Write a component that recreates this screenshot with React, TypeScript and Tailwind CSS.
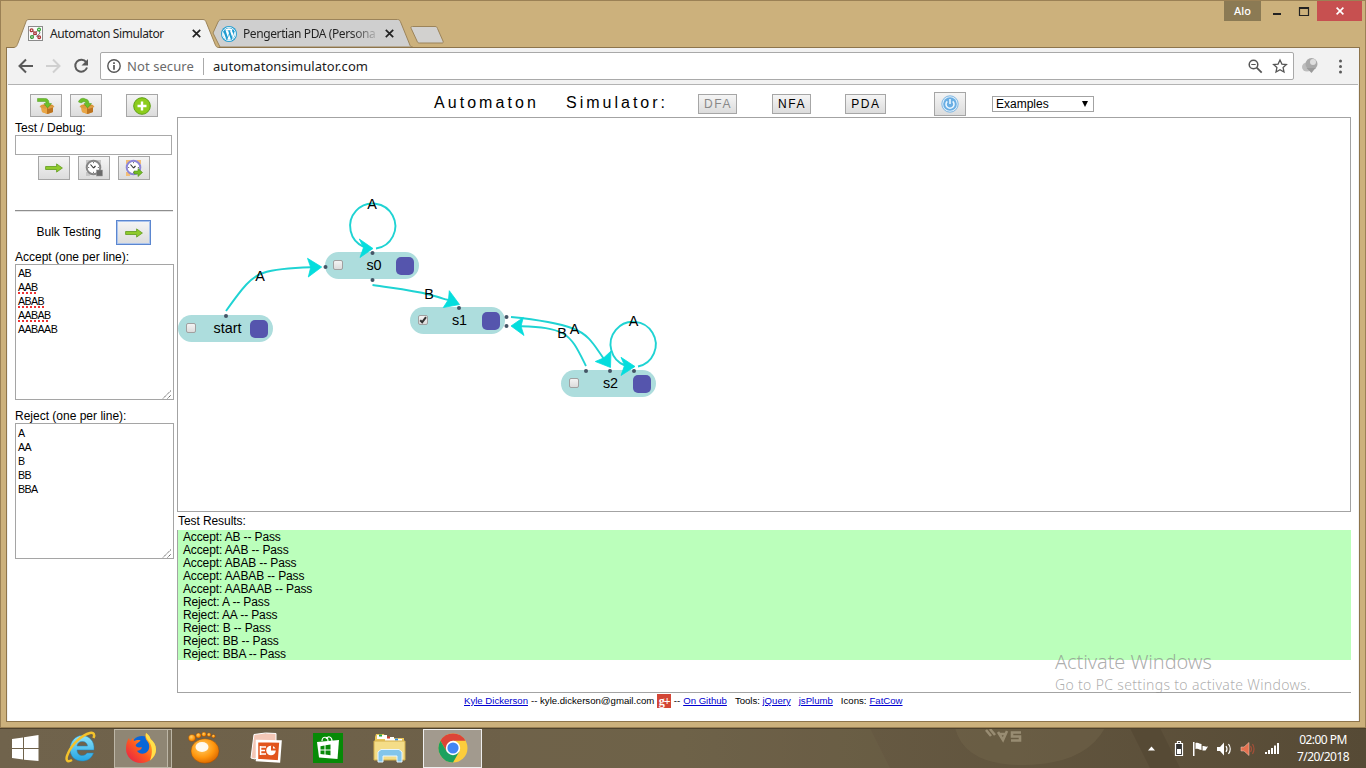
import type { ReactNode } from "react";

const ACCEPT = ["AB", "AAB", "ABAB", "AABAB", "AABAAB"];
const REJECT = ["A", "AA", "B", "BB", "BBA"];
const UI = "font-['Noto_Sans',sans-serif]";

function Close() {
  return (
    <svg className="h-[9px] w-[9px] shrink-0" viewBox="0 0 9 9">
      <path d="M.8.8l7.4 7.4M8.2.8L.8 8.2" stroke="#222" strokeWidth="1.7" />
    </svg>
  );
}

function WordPress() {
  return (
    <svg className="h-4 w-4 shrink-0" viewBox="0 0 24 24">
      <circle cx="12" cy="12" r="12" fill="#1e9bd0" />
      <circle cx="12" cy="12" r="10" fill="none" stroke="#fff" strokeWidth="1.3" />
      <path
        fill="#fff"
        d="M3.9 9.1l4 10.9A8.8 8.8 0 0 1 3.9 9.1zM5 6.8A8.8 8.8 0 0 1 18 5.5c-1.600 0-1.900 2-.8 3.500 1 1.600 1.200 3 .6 5l-1 3-3.300-9.900 1.200-.2V6.200H9.400v.7l1.300.2 1.300 3.600-1.900 5.900L7 7.100l1.200-.2v-.7H5zM12.200 12.700l2.700 7.500a9 9 0 0 1-5.400.1zM19.900 8a8.800 8.800 0 0 1-3.600 11.700l2.800-8c.4-1.300.8-2.500.8-3.700z"
      />
    </svg>
  );
}

function Favicon() {
  return (
    <svg className="h-[15px] w-[15px] shrink-0" viewBox="0 0 15 15">
      <rect x=".5" y=".5" width="14" height="14" fill="#fafafa" stroke="#8b8b8b" />
      <path d="M3.500 4l3.500 3-3 4M7 7l4-3.500M11 4l1 3-3.500 4M7 7l4 4.500" fill="none" stroke="#777" />
      <g fill="#fff" strokeWidth="1.300">
        <circle cx="3.600" cy="4.200" r="1.400" stroke="#a33" />
        <circle cx="11" cy="3.600" r="1.400" stroke="#3a3" />
        <circle cx="7" cy="7.200" r="1.300" stroke="#a33" />
        <circle cx="4" cy="11" r="1.400" stroke="#393" />
        <circle cx="11.200" cy="11.200" r="1.300" stroke="#a33" />
      </g>
    </svg>
  );
}

function TabStrip() {
  return (
    <div className="flex h-[46px] pl-[13px]">
      <div className="relative z-10 mt-[18px] flex h-[29px] w-[200px] items-center pl-[14px]">
        <svg className="absolute left-0 top-0" width="206" height="29" viewBox="0 0 206 29">
          <path d="M0 28.500C3 28 3 26 4 24L11.500 4C12.500 1 13 .5 15 .5H189c2 0 2.500 1 3.500 3.500l8.500 21c.8 2.300 1.500 3.500 4 3.500V30H0z" fill="#f2f2f2" />
          <path d="M0 28.500C3 28 3 26 4 24L11.500 4C12.500 1 13 .5 15 .5H189c2 0 2.500 1 3.500 3.500l8.500 21c.8 2.300 1.500 3.500 4 3.500" fill="none" stroke="#9c845a" />
        </svg>
        <div className="relative flex items-center">
          <Favicon />
          <span className={`${UI} ml-[7px] w-[142px] whitespace-nowrap text-[12px] tracking-[-0.4px] text-[#222]`}>Automaton Simulator</span>
          <Close />
        </div>
      </div>
      <div className="relative mt-[18px] flex h-[28px] w-[196px] items-center pl-[7px] pt-px">
        <svg className="absolute left-[-4px] top-0" width="204" height="28" viewBox="0 0 204 28">
          <path d="M3 14L8 3C9 1 10 .5 12 .5H187.500c2 0 2.500 1 3.500 3.500L199.500 25c.5 2 1.500 3 3 3H10z" fill="#cfcfcf" stroke="#9c845a" />
        </svg>
        <div className="relative flex items-center">
          <WordPress />
          <span className={`${UI} ml-[6px] mr-[8px] w-[134px] whitespace-nowrap bg-linear-to-r from-[#222] from-80% to-[#bbb] bg-clip-text text-[12px] tracking-[-0.4px] text-transparent`}>Pengertian PDA (Persona</span>
          <Close />
        </div>
      </div>
      <svg className="mt-[25px] h-[18px] w-[35px]" viewBox="0 0 35 18">
        <path d="M2.500.5H25c1.500 0 2 .5 2.500 2L33 15c.6 1.500 0 2-1 2H9.500c-1.500 0-2-.5-2.500-2L1.200 2.500C.6 1 1 .5 2.500.5z" fill="#d2d1cf" stroke="#9c845a" />
      </svg>
      <div className="ml-auto flex h-[20px] items-center self-start pr-[3px]">
        <div className={`${UI} flex h-[20px] w-[37px] items-center justify-center bg-[#8b7a54] text-[11px] font-medium text-white`}>Alo</div>
        <svg className="h-[20px] w-[56px]" viewBox="0 0 56 20">
          <path d="M12 13h8" stroke="#222" strokeWidth="2" />
          <path d="M38.500 6.500h9v8h-9zM38 7.500h10" fill="none" stroke="#222" strokeWidth="1.200" />
        </svg>
        <div className="flex h-[20px] w-[45px] items-center justify-center bg-[#c75050]">
          <svg width="8" height="8" viewBox="0 0 8 8"><path d="M.6.6l6.800 6.800M7.400.6L.6 7.400" stroke="#fff" strokeWidth="1.600" /></svg>
        </div>
      </div>
    </div>
  );
}

function Toolbar() {
  return (
    <div className="flex h-[37px] items-center border-b border-[#b3b3b3] bg-[#f2f2f2]">
      <svg className="h-[36px] w-[92px] shrink-0" viewBox="1 0 92 36" fill="none" strokeWidth="2">
        <path d="M26 18H13M19 11.500L12.500 18l6.500 6.500" stroke="#5a5a5a" />
        <path d="M39 18h13M46 11.500l6.500 6.500-6.500 6.500" stroke="#d0d0d0" />
        <path d="M79.200 14.200A6 6 0 1 0 80 19.500" stroke="#5a5a5a" />
        <path d="M81 11v6.500h-6.500z" fill="#5a5a5a" />
      </svg>
      <div className="flex h-[28px] w-[1194px] items-center rounded-[2px] border border-[#a9a9a9] bg-white pl-[6px] pr-[5px]">
        <svg className="h-[14px] w-[14px]" viewBox="0 0 14 14">
          <circle cx="7" cy="7" r="6.200" fill="none" stroke="#555" strokeWidth="1.400" />
          <path d="M7 3.200v1.700M7 6v4.800" stroke="#555" strokeWidth="1.700" />
        </svg>
        <span className={`${UI} ml-[6px] w-[76px] whitespace-nowrap pt-[2px] text-[13px] tracking-[0.08px] text-[#6b6b6b]`}>Not secure</span>
        <div className="h-[17px] w-px bg-[#aaa]" />
        <span className={`${UI} ml-[9px] whitespace-nowrap pt-[2px] text-[13px] tracking-[0.05px] text-[#1c1c1c]`}>automatonsimulator.com</span>
        <svg className="ml-auto h-[16px] w-[40px]" viewBox="0 0 40 16" fill="none" stroke="#555">
          <circle cx="5.500" cy="6.500" r="4.300" strokeWidth="1.500" />
          <path d="M8.700 9.700l5 5" strokeWidth="1.800" />
          <path d="M3.300 6.500h4.400" />
          <path d="M32 2l1.900 4.100 4.500.5-3.300 3 .9 4.400-4-2.200-4 2.200.9-4.400-3.300-3 4.500-.5z" strokeWidth="1.300" />
        </svg>
      </div>
      <svg className="h-[30px] w-[60px]" viewBox="0 0 60 30">
        <ellipse cx="13" cy="16" rx="5" ry="4.500" fill="#bdbdbd" />
        <circle cx="17.500" cy="13" r="6" fill="#a9a9a9" />
        <path d="M12.500 17l5 5 4-5z" fill="#9a9a9a" />
        <circle cx="19" cy="11" r="3" fill="#dedede" />
        <g fill="#5a5a5a"><circle cx="46.500" cy="10" r="1.500" /><circle cx="46.500" cy="15.500" r="1.500" /><circle cx="46.500" cy="21" r="1.500" /></g>
      </svg>
    </div>
  );
}

const BTN = "flex shrink-0 items-center justify-center border border-[#a6a6a6] bg-linear-to-b from-[#f5f5f5] to-[#dcdcdc]";

function BoxIcon({ flip }: { flip?: boolean }) {
  return (
    <svg width="18" height="18" viewBox="0 0 18 18">
      <path d="M4 8l7-1.500L16 8v7l-5 2-6-2z" fill="#d68b2a" />
      <path d="M4 8l6 2v7l-5-2z" fill="#e9a646" />
      <path d="M10 10l6-2v7l-6 2z" fill="#bd7420" />
      <path d="M4 8l-1.500 2 6 2L10 10zM16 8l1.500 2-6 2L10 10z" fill="#dc9c42" />
      {flip ? (
        <path d="M1.500 5C2.500 1.500 6 .5 8.500 2c2.500.5 3.500 2 3.500 4.500h2.500L10.500 11 7 6.500h2C8.500 4.500 6 4 4.500 6z" fill="#6cc02a" stroke="#4c9a1c" strokeWidth=".5" />
      ) : (
        <path d="M.5 1.500h7C11 1.500 12 3.500 12 6.500h2.500L10.500 11 7 6.500h2C9 5 8.500 4.500 7 4.500H.5z" fill="#6cc02a" stroke="#4c9a1c" strokeWidth=".5" />
      )}
    </svg>
  );
}

function AddIcon() {
  return (
    <svg width="18" height="18" viewBox="0 0 18 18">
      <circle cx="9" cy="9" r="8.300" fill="#8ccc1c" stroke="#5da012" strokeWidth="1" />
      <path d="M9 4.500v9M4.500 9h9" stroke="#fff" strokeWidth="2.400" />
    </svg>
  );
}

function ArrowIcon() {
  return (
    <svg width="18" height="10" viewBox="0 0 18 10">
      <path d="M.6 3.500h11V.9L17.400 5l-5.800 4.100V6.500H.6z" fill="#8fca2c" stroke="#5f9a1c" strokeWidth=".8" />
    </svg>
  );
}

function ClockIcon({ run }: { run?: boolean }) {
  return (
    <svg width="18" height="18" viewBox="0 0 18 18">
      <path d="M1 1h4v4H1zM12 1h4v4h-4zM1 13h4v4H1z" fill={run ? "#f2bd76" : "#c6c6c6"} />
      <circle cx="8.500" cy="8.500" r="6.800" fill="#fff" stroke={run ? "#8c85d6" : "#858585"} strokeWidth="2" />
      <path d="M8.500 9L5.500 5.500M8.500 9l2-2" stroke="#333" strokeWidth="1.100" />
      <path d="M8.500 3v1.200M14 8.500h-1.200M3 8.500h1.200M8.500 14v-1.200" stroke="#777" />
      {run ? (
        <path d="M9 12h4V9.500l4.500 4-4.500 4V15H9z" fill="#74bd25" stroke="#4e8f18" strokeWidth=".6" />
      ) : (
        <rect x="11.500" y="11" width="6" height="6" fill="#6b6b6b" stroke="#999" strokeWidth=".5" />
      )}
    </svg>
  );
}

function ListBox({ pad, children }: { pad: string; children: ReactNode }) {
  return (
    <div className={`relative h-[136px] w-[159px] border border-[#a5a5a5] bg-white px-[2px] ${pad} text-[10.700px] leading-[14px] tracking-[-0.6px]`}>
      {children}
      <svg className="absolute bottom-0 right-[1px]" width="10" height="10" viewBox="0 0 10 10">
        <path d="M1 9.500L9 1.500M5.500 9.500L9 6" stroke="#666" strokeDasharray="1.500 .5" />
      </svg>
    </div>
  );
}

function Sidebar() {
  return (
    <aside className="w-[169px] shrink-0 pl-[7px] text-[12px] leading-[14px]">
      <div className="flex pl-[15px] pt-[9px]">
        <div className={`${BTN} h-[23px] w-[32px]`}><BoxIcon /></div>
        <div className={`${BTN} ml-2 h-[23px] w-[32px]`}><BoxIcon flip /></div>
        <div className={`${BTN} ml-6 h-[23px] w-[32px]`}><AddIcon /></div>
      </div>
      <div className="mt-[4px]">Test / Debug:</div>
      <div className="h-[20px] w-[157px] border border-[#a9a9a9]" />
      <div className="mt-[1px] flex gap-2 pl-[23px]">
        <div className={`${BTN} h-[24px] w-[32px]`}><ArrowIcon /></div>
        <div className={`${BTN} h-[24px] w-[32px]`}><ClockIcon /></div>
        <div className={`${BTN} h-[24px] w-[32px]`}><ClockIcon run /></div>
      </div>
      <div className="mt-[30px] w-[158px] border-t border-[#8e8e8e] border-b border-b-[#e4e4e4]" />
      <div className="mt-[8px] flex items-center pl-[21.500px]">
        <span className="w-[79.500px] pb-[2px]">Bulk Testing</span>
        <div className={`${BTN} h-[25px] w-[35px] border-[#5b86cf]! shadow-[inset_0_0_0_1px_#a9c3ee]`}><ArrowIcon /></div>
      </div>
      <div className="mt-[5px]">Accept (one per line):</div>
      <ListBox pad="pt-px">
        {ACCEPT.map((s, i) => (
          <div key={s}>
            <span className={i > 0 && i < 4 ? "underline decoration-[#e33] decoration-dotted decoration-[1.5px] underline-offset-[1px] [text-decoration-skip-ink:none]" : ""}>{s}</span>
          </div>
        ))}
      </ListBox>
      <div className="mt-[9px]">Reject (one per line):</div>
      <ListBox pad="pt-[2px]">{REJECT.map((s) => <div key={s}>{s}</div>)}</ListBox>
    </aside>
  );
}

function Header() {
  const kind = `${BTN} h-[20px] pl-[1px] text-[12px] tracking-[1.600px]`;
  return (
    <header className="flex h-[32px] items-start pl-[257px]">
      <span className="mt-[7px] w-[132px] text-[16px] leading-[22px] tracking-[3.050px]">Automaton</span>
      <span className="mt-[7px] w-[132px] text-[16px] leading-[22px] tracking-[3px]">Simulator:</span>
      <div className={`${kind} mt-[9px] w-[39px] text-[#888]`}>DFA</div>
      <div className={`${kind} ml-[35px] mt-[9px] w-[39px]`}>NFA</div>
      <div className={`${kind} ml-[34px] mt-[9px] w-[41px]`}>PDA</div>
      <div className={`${BTN} ml-[48px] mt-[7px] h-[24px] w-[32px]`}>
        <svg width="18" height="18" viewBox="0 0 18 18">
          <circle cx="9" cy="9" r="8.200" fill="#e2f0fb" stroke="#7fb7e3" />
          <circle cx="9" cy="9" r="6.800" fill="#69aee3" />
          <path d="M6.300 6.300a4 4 0 1 0 5.400 0M9 4v5" fill="none" stroke="#e9f5ff" strokeWidth="1.600" />
        </svg>
      </div>
      <div className="ml-[26px] mt-[11px] flex h-[16px] w-[102px] items-center justify-between border border-[#a3a3a3] bg-white pl-[3px] pr-[5px] text-[12px] leading-[14px]">
        Examples
        <svg width="6" height="6" viewBox="0 0 6 6"><path d="M0 0h6L3 6z" /></svg>
      </div>
    </header>
  );
}

const NODES = [
  { id: "start", pos: "left-0 top-[197px] w-[95px]", checked: false },
  { id: "s0", pos: "left-[147px] top-[134px] w-[94px]", checked: false },
  { id: "s1", pos: "left-[232px] top-[189px] w-[95px]", checked: true },
  { id: "s2", pos: "left-[383px] top-[252px] w-[95px]", checked: false },
];
const EDGES = [
  "M226 311C243 287 251 277 263 273S292 267.800 311 267.300",
  "M376 248.500A22.600 22.600 0 1 0 364 247",
  "M372.500 285C391 288 411 290 429 294.500S441 299 449 300",
  "M511 317C536 319.500 557 322.500 573 328.500S594 345 604 359",
  "M586 366C578 350 573 339 563 333.500S541 327 521 326.300",
  "M638 366.500A22.600 22.600 0 1 0 625 365.500",
];
const ARROWS = [
  "321.700 267 307.500 258.300 310.700 267.300 308.300 277",
  "373 248.500 359.300 239 363.500 247.500 360 257.500",
  "459.500 304.500 449.300 290.700 448.500 299.500 443.300 307.500",
  "610.500 367.500 611 351 603.500 358 595.300 361.500",
  "511 326 523.300 317.500 521 326.300 524 335.500",
  "635 366.500 621 357.300 624.500 365.500 621 375.500",
];
const DOTS = [[226, 316], [325.500, 267], [372.500, 253], [372.500, 280], [459, 308], [506.500, 317], [506.500, 326], [586, 371], [610, 371], [634, 371]];
const LABELS: [string, number, number][] = [["A", 260, 281], ["A", 372, 209], ["B", 429, 299], ["A", 574.500, 334], ["B", 562, 338], ["A", 633.500, 326]];

function Diagram() {
  return (
    <div className="relative h-[395px] w-[1174px] border border-[#a3a3a3]">
      {NODES.map((n) => (
        <div key={n.id} className={`absolute ${n.pos} flex h-[27px] items-center rounded-full bg-[#addddd] pl-[8px] pr-[5px]`}>
          <div className="mb-[2px] h-[10px] w-[10px] shrink-0 rounded-[2px] border border-[#a0a0a0] bg-linear-to-b from-[#f3f3f3] to-[#dcdcdc]">
            {n.checked && (
              <svg className="h-[8px] w-[8px]" viewBox="0 0 8 8"><path d="M1.200 4.200l2 2L7 1.200" fill="none" stroke="#333" strokeWidth="2" /></svg>
            )}
          </div>
          <span className="mb-[2px] min-w-0 flex-1 pl-[9px] text-center text-[14.400px] leading-[18px]">{n.id}</span>
          <div className="h-[18px] w-[18px] shrink-0 rounded-[5px] bg-[#5555ad]" />
        </div>
      ))}
      <svg className="absolute left-0 top-0" width="1172" height="393" viewBox="178 118 1172 393">
        {EDGES.map((d) => <path key={d} d={d} fill="none" stroke="#1fd3d3" strokeWidth="1.900" />)}
        {ARROWS.map((p) => <polygon key={p} points={p} fill="#05dddd" stroke="#05dddd" strokeWidth=".8" />)}
        {DOTS.map(([x, y]) => <circle key={`${x}-${y}`} cx={x} cy={y} r="2" fill="#456" />)}
        {LABELS.map(([t, x, y]) => <text key={`${x}`} x={x} y={y} textAnchor="middle" fontSize="14.400">{t}</text>)}
      </svg>
    </div>
  );
}

function Footer() {
  const link = "text-[#0000d0] underline";
  return (
    <footer className="flex h-[16px] items-center whitespace-nowrap pl-[287px] text-[9.600px]">
      <a className={link}>Kyle Dickerson</a>
      <span className="ml-[3px]">-- kyle.dickerson@gmail.com</span>
      <div className="ml-[3px] mr-[2.500px] flex h-[14px] w-[14px] items-center justify-center bg-[#d34636] font-['Liberation_Serif',serif] text-[12px] font-bold leading-none tracking-[-1px] text-white">g+</div>
      <span>--</span>
      <a className={`${link} ml-[3px]`}>On Github</a>
      <span className="ml-[8px]">Tools:</span>
      <a className={`${link} ml-[2.500px]`}>jQuery</a>
      <a className={`${link} ml-[8px]`}>jsPlumb</a>
      <span className="ml-[8px]">Icons:</span>
      <a className={`${link} ml-[3px]`}>FatCow</a>
    </footer>
  );
}

function Page() {
  return (
    <div className="flex h-[636px] bg-white font-['Liberation_Sans',Arial,sans-serif] text-black">
      <Sidebar />
      <main className="w-[1174px]">
        <Header />
        <Diagram />
        <div className="h-[18px] pl-px text-[12px] leading-[18px] tracking-[-0.08px]">Test Results:</div>
        <div className="h-[163px] w-[1174px] border-b border-l border-[#a3a3a3]">
          <div className="h-[130px] bg-[#bbffbb] pl-[5px] pt-px text-[12px] leading-[13px] tracking-[-0.13px]">
            {ACCEPT.map((s) => <div key={s}>Accept: {s} -- Pass</div>)}
            {REJECT.map((s) => <div key={s}>Reject: {s} -- Pass</div>)}
          </div>
        </div>
        <Footer />
      </main>
    </div>
  );
}

function TaskIcons() {
  return (
    <>
      <svg className="ml-[12px] h-[27px] w-[27px]" viewBox="0 0 27 27" fill="#fff">
        <path d="M0 4l11-1.600V13H0zM12 2.200L26.500 0v13H12zM0 14h11v10.500L0 23zM12 14h14.500v12L12 24.700z" />
      </svg>
      <svg className="ml-[25px] h-[34px] w-[34px]" viewBox="0 0 34 34">
        <defs><linearGradient id="ie" x1="0" y1="0" x2="0" y2="1"><stop offset="0" stopColor="#8be3fb" /><stop offset="1" stopColor="#25a5e2" /></linearGradient></defs>
        <path d="M30 19H13c.3 4 2.500 5.500 5.300 5.500 2.300 0 3.700-1 4.700-2.500h6.500C27.500 27.500 23.500 30 18 30 10.500 30 6 25 6 18S11 4.500 18 4.500 31 10 30 19zM13 15h10.500c-.3-3-2.300-4.500-5.200-4.500S13.500 12 13 15z" fill="url(#ie)" stroke="#1f83bd" strokeWidth=".5" />
        <path d="M8 29C3 32 1 29 4 22.500 8 13 18 4 26 2c4-.8 5 1.500 3.500 5" fill="none" stroke="#f4c22c" strokeWidth="2.500" />
      </svg>
      <div className="ml-[16px] flex h-[39px] w-[54px] items-center justify-center border border-[#bdb6a6] bg-[#8f8674]">
        <svg width="32" height="32" viewBox="0 0 32 32">
          <defs>
            <linearGradient id="fx" x1="0" y1="1" x2="1" y2="0"><stop offset="0" stopColor="#e3174f" /><stop offset=".45" stopColor="#ff5b1f" /><stop offset="1" stopColor="#ffd92a" /></linearGradient>
          </defs>
          <circle cx="17" cy="15" r="11" fill="#0a66d8" />
          <path d="M21 1c3 2 4 4 4.500 6C29 10 31 13 31 17.500 31 25.500 24 31 16 31S1 25 1 17C1 12 2 9 4 6l1 3 3-3 1 3 3-1c2 0 3 0 3.500.7L12 11.500c-2.500 2-1 3.500 2 4l3-.2c-1 3-3.500 3.700-5 3.500 2 4 8.500 4 11 0 2-3 1.500-7-.5-9.300C20 7 20 4 21 1z" fill="url(#fx)" />
          <path d="M21 1c3 2 4 4 4.500 6C29 10 31 13 31 17.500c0 4.500-2.500 8.500-6 11C27 23 28 17 25 11c-1.500-3-5-4.500-4-10z" fill="#ffe04a" />
        </svg>
      </div>
      <div className="h-[39px] w-[4px] border border-l-0 border-[#bdb6a6] bg-[#7d735f]" />
      <svg className="ml-[16px] h-[34px] w-[34px]" viewBox="0 0 34 34">
        <defs><radialGradient id="gom" cx=".4" cy=".35" r=".7"><stop offset="0" stopColor="#ffd06a" /><stop offset=".6" stopColor="#ff970e" /><stop offset="1" stopColor="#d96500" /></radialGradient></defs>
        <g fill="url(#gom)" stroke="#8f4703" strokeWidth=".4">
          <ellipse cx="17" cy="20" rx="14" ry="12.300" /><circle cx="4" cy="7" r="3.600" /><circle cx="10.500" cy="4.500" r="2.600" /><circle cx="16" cy="3.400" r="2.300" /><circle cx="21" cy="3.800" r="2" /><circle cx="25.500" cy="5.200" r="1.800" />
        </g>
        <ellipse cx="14" cy="16" rx="6.500" ry="5" fill="#fff" opacity=".9" />
      </svg>
      <svg className="ml-[28px] h-[32px] w-[33px]" viewBox="0 0 33 32">
        <path d="M4 2.500Q16 0 26 1.500V9L5 27 1 26z" fill="#f4c7b6" stroke="#fff" />
        <path d="M7 9l23.500.5-1.500 20-22-1.500z" fill="#e2551d" stroke="#fff" strokeWidth="2.500" />
        <circle cx="21" cy="18.500" r="4.800" fill="#fff" />
        <path d="M21 18.500h5v-2h-3v-3h-2z" fill="#e2551d" />
        <path d="M10 15h6M10 18.500h5M10 22h6M10.500 14v9" stroke="#fff" strokeWidth="1.600" />
      </svg>
      <svg className="ml-[30px] h-[30px] w-[30px]" viewBox="0 0 30 30">
        <path d="M0 0h30v30H0z" fill="#078a07" />
        <path d="M9 8c0-5 6-5 6 0M13 6c2-4 6-2 6 2" fill="none" stroke="#fff" strokeWidth="1.200" />
        <path d="M4 9l22-2-1.500 19L6 24.500z" fill="#fff" />
        <path d="M7.500 13.200l4-.7v4h-4zM12.500 12.300l5-.8v5h-5zM7.500 17.500h4v4l-4-.6zM12.500 17.500h5v4.800l-5-.7z" fill="#078a07" />
      </svg>
      <svg className="ml-[30px] h-[32px] w-[34px]" viewBox="0 0 34 32">
        <path d="M2 5l1-3h8l1 3h7l1 1h11v6H2z" fill="#e9c55a" />
        <path d="M4 3h10v4H4zM12 5h9v4h-9zM20 7h9v4h-9z" fill="#fff" />
        <path d="M6 2.500h3v2H6z" fill="#29a343" /><path d="M14 4.500h3v2h-3z" fill="#d3412e" /><path d="M22 6.500h3v2h-3z" fill="#318de0" />
        <path d="M1 9h31v19H1z" fill="#f4dd88" stroke="#d4b04a" />
        <path d="M5 30V20l3-2.500h18l3 2.500v10h-5v-6H10v6z" fill="#83c5ea" stroke="#e9f6fd" />
      </svg>
      <div className="ml-[16px] flex h-[39px] w-[59px] items-center justify-center border border-[#eee] bg-[#a29a8e]">
        <svg width="30" height="30" viewBox="0 0 30 30">
          <circle cx="15" cy="15" r="14.500" fill="#fccd3c" />
          <path d="M2.440 7.750A14.500 14.500 0 0 1 27.560 7.750H15L8.700 18.600z" fill="#dc4437" />
          <path d="M2.440 7.750A14.500 14.500 0 0 0 15 29.500L21.300 18.600 15 22 8.700 18.600z" fill="#1ca15f" />
          <circle cx="15" cy="15" r="7.200" fill="#fff" /><circle cx="15" cy="15" r="5.600" fill="#4385f4" />
        </svg>
      </div>
    </>
  );
}

function Tray() {
  return (
    <svg className="ml-auto h-[20px] w-[136px]" viewBox="0 0 136 20" fill="#fff">
      <path d="M4 12.500l3.500-4 3.500 4z" />
      <path d="M31.500 5.500h7v12h-7zM33.500 3.500h3v2h-3z" fill="#333" stroke="#fff" strokeWidth="1.200" /><path d="M33 11h4v5h-4z" />
      <path d="M49 4h1.500v14H49zM51.500 5c3-1 4 1 6 1v6c-2 0-3-2-6-1zM58.500 8c2 0 3 1 5.500.5l-2.500 4h-3z" />
      <path d="M73 9h3l4-4.500v13L76 13h-3z" />
      <path d="M82 8q2 3 0 6M84.500 6q3.500 5 0 10" fill="none" stroke="#fff" strokeWidth="1.200" />
      <path d="M97 9h3l5-4.500v13L100 13h-3z" fill="#e4714f" stroke="#f6cabc" strokeWidth=".5" />
      <path d="M106.500 8q2 3 0 6M108.500 6q3 5 0 10" fill="none" stroke="#a34f38" strokeWidth="1.200" />
      <path d="M121 14h2v2h-2zM124 12h2v4h-2zM127 10h2v6h-2zM130 7.500h2V16h-2zM133 5h2v11h-2z" />
    </svg>
  );
}

export default function App() {
  return (
    <div className="relative flex h-[768px] w-[1366px] flex-col overflow-hidden">
      <div className="h-[728px] border border-[#9b8155] bg-[#ccb17c]">
        <TabStrip />
        <div className="mx-[5px] h-[675px] border border-[#8d744b] bg-[#f2f2f2] px-px">
          <Toolbar />
          <Page />
        </div>
      </div>
      <div className="relative flex h-[40px] items-center bg-linear-to-r from-[#70634c] via-[#6c5f47] to-[#564a35]">
        <svg className="absolute left-0 top-0" width="1366" height="40" viewBox="0 0 1366 40">
          <path d="M500 0h370l20 40H500z" fill="#7a6c52" opacity=".2" />
          <path d="M955 0h150q-20 36-80 37t-70-37z" fill="#75684d" opacity=".4" />
          <path d="M1130 0h30l20 40h-30z" fill="#4f432f" opacity=".5" />
          <g fill="none" stroke="#a89c82" strokeWidth="2.600" opacity=".75">
            <path d="M986 2l5 6M990 1l5 6M998 4l5 8 4-9M1000 6h6M1021 4.500h-9v4h8v4h-9" />
          </g>
          <path d="M0 .5h1366" stroke="#4d412c" />
        </svg>
        <div className="relative flex w-full items-center">
          <TaskIcons />
          <Tray />
          <div className={`${UI} ml-[15px] mr-[15px] w-[56px] whitespace-nowrap text-center text-[12px] leading-[17px] tracking-[-0.55px] text-white`}>
            <div>02:00 PM</div>
            <div>7/20/2018</div>
          </div>
        </div>
      </div>
      <div className={`${UI} pointer-events-none absolute left-[1055px] top-[648px] whitespace-nowrap font-light text-[#8a8a8a]/70`}>
        <div className="text-[20px] leading-[28px] tracking-[-0.1px]">Activate Windows</div>
        <div className="text-[14px] leading-[18px] tracking-[0.330px]">Go to PC settings to activate Windows.</div>
      </div>
    </div>
  );
}
